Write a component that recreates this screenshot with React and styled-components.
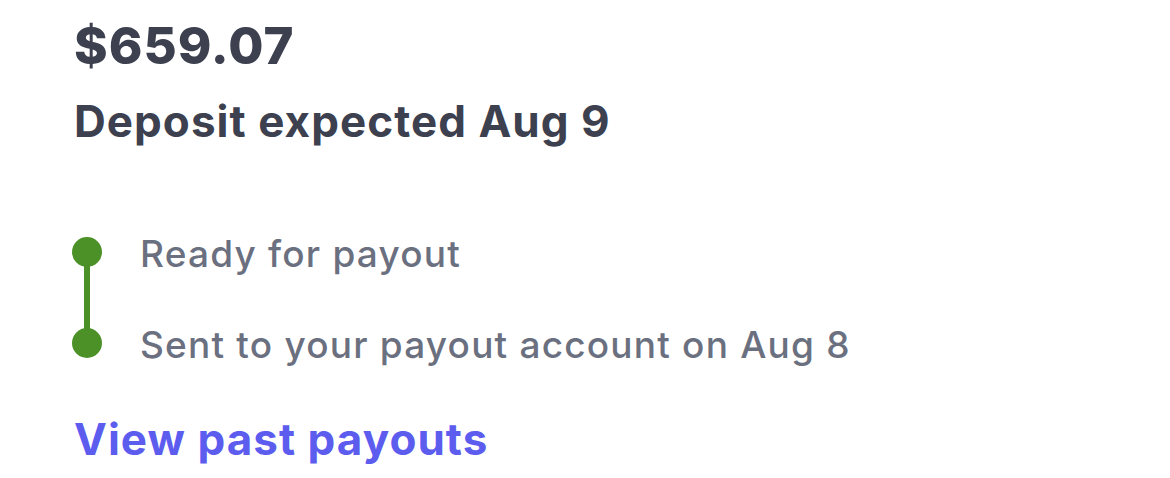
import React from "react";
import styled, { createGlobalStyle } from "styled-components";

const Global = createGlobalStyle`
  html, body { margin: 0; padding: 0; background: #ffffff; }
  body { font-family: Inter, "Noto Sans", sans-serif; -webkit-font-smoothing: antialiased; }
`;

const Card = styled.div`
  padding: 14px 0 0 74px;
  display: flex;
  flex-direction: column;
`;

const Amount = styled.div`
  font-size: 51px;
  font-weight: 800;
  line-height: 64px;
  color: #3d414f;
  letter-spacing: 1px;
`;

const Headline = styled.div`
  font-size: 44px;
  font-weight: 700;
  line-height: 52px;
  color: #3d414f;
  letter-spacing: 1.05px;
  margin-top: 17px;
`;

const Timeline = styled.ul`
  list-style: none;
  margin: 84px 0 0 0;
  padding: 0;
  display: flex;
  flex-direction: column;
  gap: 47px;
`;

const Step = styled.li`
  position: relative;
  display: flex;
  align-items: center;
  height: 44px;
  padding-left: 66px;
  font-size: 37px;
  font-weight: 500;
  letter-spacing: 1.2px;
  color: #6b7080;

  &::before {
    content: "";
    position: absolute;
    left: -2px;
    top: 6px;
    width: 30px;
    height: 30px;
    border-radius: 50%;
    background: #4b9128;
  }

  &:not(:last-child)::after {
    content: "";
    position: absolute;
    left: 10px;
    top: 21px;
    width: 6px;
    height: 91px;
    background: #4b9128;
  }
`;

const Link = styled.a`
  margin-top: 47px;
  font-size: 44px;
  font-weight: 700;
  line-height: 52px;
  letter-spacing: 1.05px;
  color: #5c5cef;
  text-decoration: none;
  align-self: flex-start;
`;

export default function App() {
  return (
    <>
      <Global />
      <Card>
        <Amount>$659.07</Amount>
        <Headline>Deposit expected Aug 9</Headline>
        <Timeline>
          <Step>Ready for payout</Step>
          <Step>Sent to your payout account on Aug 8</Step>
        </Timeline>
        <Link href="#">View past payouts</Link>
      </Card>
    </>
  );
}
